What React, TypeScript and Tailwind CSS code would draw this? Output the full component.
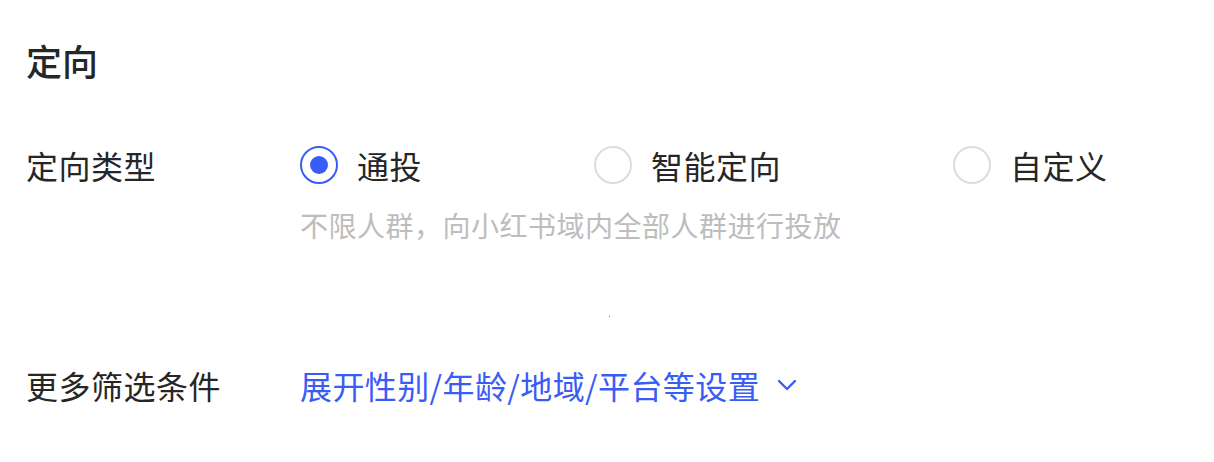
import React, { useState } from "react";

const options = [
  { id: "all", label: "通投" },
  { id: "smart", label: "智能定向" },
  { id: "custom", label: "自定义" },
];

function Radio({ checked }: { checked: boolean }) {
  return (
    <span
      className={
        checked
          ? "flex h-[38px] w-[38px] shrink-0 items-center justify-center rounded-full border-[2.5px] border-[#3a5cf6]"
          : "flex h-[38px] w-[38px] shrink-0 items-center justify-center rounded-full border-2 border-[#dcdcdc]"
      }
    >
      {checked && <span className="h-[18px] w-[18px] rounded-full bg-[#3a5cf6]" />}
    </span>
  );
}

export default function App() {
  const [type, setType] = useState("all");

  return (
    <div
      className="min-h-[462px] w-[1214px] bg-white pl-[26px] pt-[42px] text-[#262626]"
      style={{ fontFamily: '"Noto Sans CJK SC", "Noto Sans", sans-serif' }}
    >
      <h2 className="text-[36px] leading-[36px] font-medium">定向</h2>

      <div className="mt-[68px] flex">
        <div className="flex h-[38px] w-[274px] items-center text-[32px] leading-[32px] tracking-[0.5px]">定向类型</div>
        <div>
          <div className="flex gap-[172px]">
            {options.map((o) => (
              <button
                key={o.id}
                type="button"
                onClick={() => setType(o.id)}
                className="flex h-[38px] items-center gap-[19px] text-[32px] leading-[32px] tracking-[0.5px]"
              >
                <Radio checked={type === o.id} />
                <span>{o.label}</span>
              </button>
            ))}
          </div>
          <p className="mt-[27px] text-[28px] leading-[28px] tracking-[0.5px] text-[#bdbdbd]">
            不限人群，向小红书域内全部人群进行投放
          </p>
        </div>
      </div>

      <div className="ml-[583px] mt-[77px] h-[1px] w-[1px] bg-[#666]" />

      <div className="mt-[52px] flex items-center">
        <div className="w-[274px] text-[32px] leading-[32px] tracking-[0.5px]">更多筛选条件</div>
        <button
          type="button"
          className="flex items-center gap-[17px] text-[32px] leading-[32px] tracking-[0.4px] text-[#3a5cf6]"
        >
          <span>展开性别/年龄/地域/平台等设置</span>
          <svg width="20" height="12" viewBox="0 0 20 12" fill="none">
            <path d="M2 2l8 8 8-8" stroke="#3a5cf6" strokeWidth="2.4" strokeLinecap="round" strokeLinejoin="round" />
          </svg>
        </button>
      </div>
    </div>
  );
}
